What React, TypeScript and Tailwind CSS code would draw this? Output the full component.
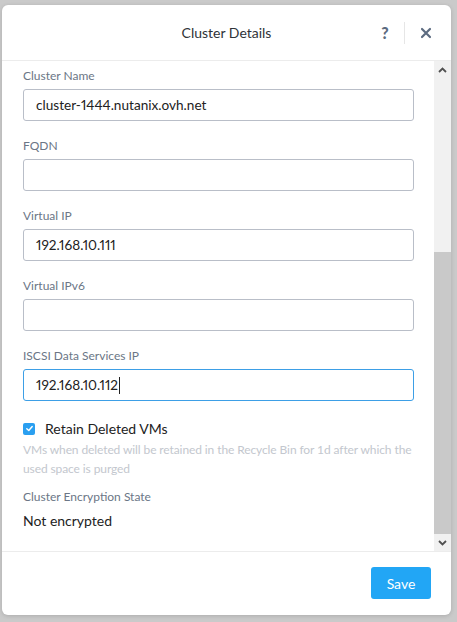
import React from 'react';

const fields = [
  { label: 'Cluster Name', value: 'cluster-1444.nutanix.ovh.net' },
  { label: 'FQDN', value: '' },
  { label: 'Virtual IP', value: '192.168.10.111' },
  { label: 'Virtual IPv6', value: '' },
  { label: 'ISCSI Data Services IP', value: '192.168.10.112', focused: true },
];

function Field({ label, value, focused }: { label: string; value: string; focused?: boolean }) {
  return (
    <div className="flex flex-col">
      <label className="h-[16px] text-[12px] leading-[16px] text-[#6b7686]">{label}</label>
      <div
        className={`mt-[5px] flex h-[32px] items-center rounded-[3px] border px-[12px] text-[13.6px] text-[#222] proportional-nums ${
          focused ? 'border-[#3d9fe6]' : 'border-[#b9bec8]'
        }`}
      >
        <span>{value}</span>
        {focused && <span className="ml-[1px] h-[17px] w-px bg-[#222]" />}
      </div>
    </div>
  );
}

export default function App() {
  return (
    <div
      className="flex h-[622px] w-[457px] flex-col bg-[#cacaca] px-[2px] pt-[5px]"
      style={{ fontFamily: 'Lato, "Open Sans", sans-serif' }}
    >
      <div className="flex h-[610px] w-[449px] flex-col overflow-hidden rounded-[6px] bg-white shadow-[0_1px_4px_rgba(0,0,0,0.15)]">
        {/* header */}
        <div className="relative flex h-[56px] shrink-0 items-center justify-center border-b border-[#ececec]">
          <h2 className="text-[14px] text-[#2f3338]">Cluster Details</h2>
          <div className="absolute right-[19px] top-0 flex h-full items-center">
            <span className="w-[20px] text-center text-[16px] font-black text-[#5c6b80]">?</span>
            <span className="ml-[9px] mr-[15px] h-[22px] w-px bg-[#e6e6e6]" />
            <svg width="12" height="12" viewBox="0 0 12 12">
              <path d="M2 2 L10 10 M10 2 L2 10" stroke="#5c6b80" strokeWidth="2.2" strokeLinecap="round" />
            </svg>
          </div>
        </div>

        {/* body */}
        <div className="flex h-[491px] shrink-0 border-b border-[#ececec]">
          <div className="flex flex-1 flex-col pl-[21px] pr-[20px] pt-[7px]">
            <div className="flex flex-col gap-[17px]">
              {fields.map((f) => (
                <Field key={f.label} {...f} />
              ))}
            </div>

            <div className="mt-[17px] flex items-center">
              <span className="flex h-[12px] w-[12px] items-center justify-center rounded-[2px] bg-[#2a9ff0]">
                <svg width="9" height="9" viewBox="0 0 10 10">
                  <path d="M2 5.2 L4.2 7.3 L8 2.8" stroke="white" strokeWidth="1.6" fill="none" strokeLinecap="round" strokeLinejoin="round" />
                </svg>
              </span>
              <span className="ml-[10px] text-[14px] text-[#222]">Retain Deleted VMs</span>
            </div>
            <p className="mt-[1px] text-[12px] leading-[19px] tracking-[-0.1px] text-[#c3c7ce]">
              VMs when deleted will be retained in the Recycle Bin for 1d after which the used space is purged
            </p>

            <div className="mt-[11px] text-[12px] leading-[16px] text-[#6b7686]">Cluster Encryption State</div>
            <div className="mt-[5px] text-[14px] text-[#222]">Not encrypted</div>
          </div>

          {/* scrollbar */}
          <div className="flex w-[17px] shrink-0 flex-col bg-[#f1f1f1]">
            <div className="flex h-[17px] items-center justify-center">
              <svg width="9" height="6" viewBox="0 0 9 6">
                <path d="M1 5 L4.5 1.5 L8 5" stroke="#505050" strokeWidth="1.8" fill="none" />
              </svg>
            </div>
            <div className="h-[174px]" />
            <div className="flex-1 bg-[#c9c9c9]" />
            <div className="flex h-[17px] items-center justify-center">
              <svg width="9" height="6" viewBox="0 0 9 6">
                <path d="M1 1 L4.5 4.5 L8 1" stroke="#505050" strokeWidth="1.8" fill="none" />
              </svg>
            </div>
          </div>
        </div>

        {/* footer */}
        <div className="flex flex-1 items-start justify-end pr-[20px] pt-[15px]">
          <button className="h-[32px] w-[60px] rounded-[3px] bg-[#22a6f5] text-[14px] text-white">Save</button>
        </div>
      </div>
    </div>
  );
}
